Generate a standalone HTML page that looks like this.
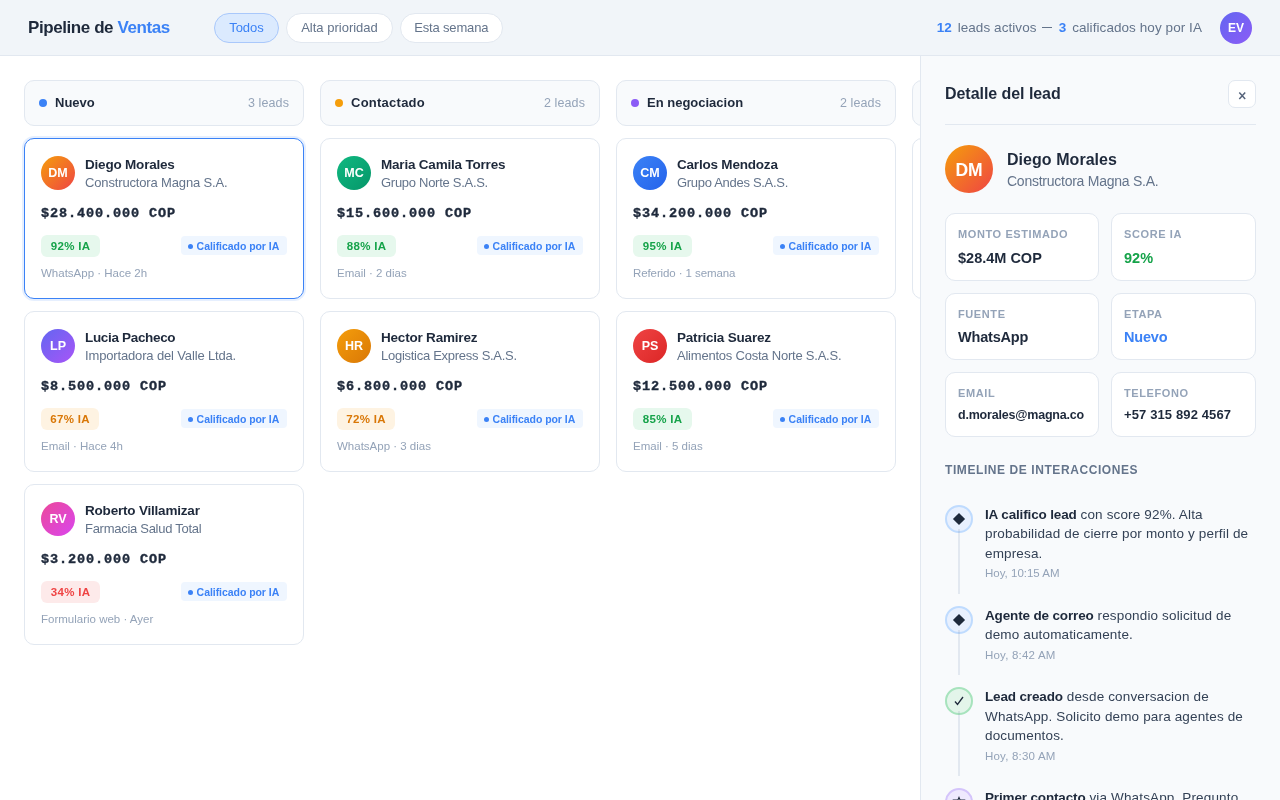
<!DOCTYPE html>
<html lang="es">
<head>
<meta charset="utf-8">
<title>Pipeline de Ventas</title>
<style>
*{box-sizing:border-box;margin:0;padding:0}
html,body{width:1280px;height:800px;overflow:hidden;background:#fff}
body{font-family:"Liberation Sans",sans-serif;color:#1e293b;position:relative;-webkit-font-smoothing:antialiased;will-change:transform}
.top{position:absolute;left:0;top:0;width:1280px;height:56px;background:#f1f5f9;border-bottom:1px solid #e2e8f0}
.brand{position:absolute;left:28px;top:17px;font-size:17px;font-weight:700;line-height:22px;color:#1e293b;white-space:nowrap;letter-spacing:-.42px}
.brand span{color:#3b82f6}
.chip{position:absolute;top:13px;height:30px;border:1px solid #e2e8f0;border-radius:15px;background:#fff;color:#64748b;font-size:13px;line-height:28px;text-align:center;white-space:nowrap}
.chip.on{background:#dbeafe;border-color:#a9c8fb;color:#3b82f6}
.stats{position:absolute;right:78px;top:18px;font-size:13.5px;letter-spacing:.07px;line-height:20px;color:#64748b;white-space:nowrap}
.stats b{color:#3b82f6;font-weight:700;margin-right:2px}
.me{position:absolute;left:1220px;top:12px;width:32px;height:32px;border-radius:50%;background:linear-gradient(135deg,#6366f1,#8b5cf6);color:#fff;font-size:12px;font-weight:700;line-height:32px;text-align:center}

.col{position:absolute;top:80px;width:280px}
.colh{height:46px;border:1px solid #e2e8f0;border-radius:10px;background:#f8fafc;position:relative}
.colh i{position:absolute;left:14px;top:18px;width:8px;height:8px;border-radius:50%}
.colh b{position:absolute;left:30px;top:13px;font-size:13px;line-height:18px;font-weight:700;color:#1e293b}
.colh span{position:absolute;right:14px;top:13px;font-size:12.5px;line-height:18px;letter-spacing:.1px;color:#94a3b8}
.card{position:relative;margin-top:12px;height:161px;border:1px solid #e2e8f0;border-radius:10px;background:#fff}
.card.sel{border-color:#3b82f6;box-shadow:0 0 0 2px rgba(59,130,246,.13)}
.av{position:absolute;left:16px;top:17px;width:34px;height:34px;border-radius:50%;color:#fff;font-size:12.5px;font-weight:700;line-height:34px;text-align:center}
.nm{position:absolute;left:60px;top:17px;font-size:13.5px;letter-spacing:-.2px;font-weight:700;line-height:18px;color:#1e293b;white-space:nowrap}
.co{position:absolute;left:60px;top:35px;font-size:13px;letter-spacing:-.15px;line-height:18px;color:#64748b;white-space:nowrap}
.amt{position:absolute;left:16px;top:67px;font-family:"Liberation Mono",monospace;font-size:13.5px;letter-spacing:.9px;font-weight:700;-webkit-text-stroke:.4px #1e293b;line-height:16px;color:#1e293b;white-space:nowrap}
.sc{position:absolute;left:16px;top:96px;height:22px;border-radius:6px;font-size:11.5px;letter-spacing:.3px;font-weight:700;line-height:22.6px;text-align:center}
.sc.g{background:#e6f8ed;color:#16a34a}
.sc.o{background:#fef3e2;color:#d97706}
.sc.r{background:#fdeaea;color:#ef4444}
.ia{position:absolute;right:16px;top:97px;width:106px;height:19px;border-radius:4px;background:#eff6ff;color:#3b82f6;font-size:10.5px;letter-spacing:-.05px;font-weight:700;line-height:20.2px;white-space:nowrap;padding-left:15.6px}
.ia:before{content:"";position:absolute;left:6.7px;top:7.5px;width:5px;height:5px;border-radius:50%;background:#3b82f6}
.ft{position:absolute;left:16px;top:126px;font-size:11.5px;line-height:16px;color:#94a3b8;white-space:nowrap}

.panel{position:absolute;left:920px;top:56px;width:360px;height:744px;background:#f8fafc;border-left:1px solid #e2e8f0;overflow:hidden}

.ph{position:absolute;left:24px;top:26px;font-size:16px;letter-spacing:-.05px;font-weight:700;line-height:24px;color:#1e293b;white-space:nowrap}
.px{position:absolute;left:307px;top:24px;width:28px;height:28px;border:1px solid #e2e8f0;border-radius:7px;background:#fff;color:#64748b;font-size:16px;line-height:26px;text-align:center}
.pl{position:absolute;left:24px;top:68px;width:311px;height:1px;background:#e2e8f0}
.pav{position:absolute;left:24px;top:89px;width:48px;height:48px;border-radius:50%;background:linear-gradient(135deg,#f59e0b,#ef4444);color:#fff;font-size:17.5px;font-weight:700;line-height:50px;text-align:center}
.pn{position:absolute;left:86px;top:93px;font-size:16px;letter-spacing:.05px;font-weight:700;line-height:22px;color:#1e293b;white-space:nowrap}
.pc{position:absolute;left:86px;top:114.5px;font-size:14px;letter-spacing:-.25px;line-height:20px;color:#64748b;white-space:nowrap}
.cell{position:absolute;border:1px solid #e2e8f0;border-radius:10px;background:#fff}
.cell u{position:absolute;left:12px;top:13px;text-decoration:none;font-size:11px;font-weight:700;line-height:14px;letter-spacing:.6px;color:#94a3b8;white-space:nowrap}
.cell b{position:absolute;left:12px;top:34px;font-size:14.5px;font-weight:700;line-height:20px;color:#1e293b;white-space:nowrap}
.cell b.s{font-size:13px;top:32px}
.tlh{position:absolute;left:24px;top:405.5px;font-size:12px;font-weight:700;line-height:16px;letter-spacing:.58px;color:#64748b;white-space:nowrap}
.tl{position:absolute;left:24px;width:311px}
.tl .ic{position:absolute;left:0;top:0;width:28px;height:28px;border-radius:50%;border:2px solid #bfdbfe;background:#e8f0fe;z-index:2}
.tl .ic.g{border-color:#a7e3bd;background:#e3f5ea}
.tl .ic.p{border-color:#d4c4fb;background:#efe9fe}
.tl .ln{position:absolute;left:13px;top:24px;width:2px;z-index:3;background:linear-gradient(180deg,rgba(148,163,184,.22) 0,rgba(148,163,184,.22) 4px,#e2e8f0 4px)}
.tl p{position:absolute;left:40px;top:.3px;width:274px;font-size:13.5px;letter-spacing:.15px;line-height:19.5px;color:#334155}
.tl p b{color:#1e293b;font-weight:700;letter-spacing:-.15px}
.tl em{position:absolute;left:40px;font-style:normal;font-size:11.5px;line-height:16px;color:#94a3b8;white-space:nowrap}
</style>
</head>
<body>
<div class="top">
  <div class="brand">Pipeline de <span>Ventas</span></div>
  <div class="chip on" style="left:214px;width:65px"><span>Todos</span></div>
  <div class="chip" style="left:286px;width:107px"><span>Alta prioridad</span></div>
  <div class="chip" style="left:400px;width:102.5px"><span style="letter-spacing:-.15px">Esta semana</span></div>
  <div class="stats"><b>12</b> <span>leads activos</span> <span style="display:inline-block;width:10px;height:1px;background:#64748b;vertical-align:4px;margin:0 3.2px 0 1.3px"></span> <b>3</b> <span>calificados hoy por IA</span></div>
  <div class="me">EV</div>
</div>

<div class="col" style="left:24px">
  <div class="colh"><i style="background:#3b82f6"></i><b>Nuevo</b><span>3 leads</span></div>
  <div class="card sel">
    <div class="av" style="background:linear-gradient(135deg,#f59e0b,#ef4444)">DM</div>
    <div class="nm">Diego Morales</div><div class="co">Constructora Magna S.A.</div>
    <div class="amt">$28.400.000 COP</div>
    <div class="sc g" style="width:59px">92% IA</div><div class="ia">Calificado por IA</div>
    <div class="ft">WhatsApp · Hace 2h</div>
  </div>
  <div class="card">
    <div class="av" style="background:linear-gradient(135deg,#6366f1,#a855f7)">LP</div>
    <div class="nm" style="letter-spacing:-.33px">Lucia Pacheco</div><div class="co">Importadora del Valle Ltda.</div>
    <div class="amt">$8.500.000 COP</div>
    <div class="sc o" style="width:58px">67% IA</div><div class="ia">Calificado por IA</div>
    <div class="ft">Email · Hace 4h</div>
  </div>
  <div class="card">
    <div class="av" style="background:linear-gradient(135deg,#ec4899,#d946ef)">RV</div>
    <div class="nm">Roberto Villamizar</div><div class="co" style="letter-spacing:-.28px">Farmacia Salud Total</div>
    <div class="amt">$3.200.000 COP</div>
    <div class="sc r" style="width:59px">34% IA</div><div class="ia">Calificado por IA</div>
    <div class="ft">Formulario web · Ayer</div>
  </div>
</div>

<div class="col" style="left:320px">
  <div class="colh"><i style="background:#f59e0b"></i><b style="letter-spacing:.25px">Contactado</b><span>2 leads</span></div>
  <div class="card">
    <div class="av" style="background:linear-gradient(135deg,#10b981,#059669)">MC</div>
    <div class="nm">Maria Camila Torres</div><div class="co" style="letter-spacing:-.28px">Grupo Norte S.A.S.</div>
    <div class="amt">$15.600.000 COP</div>
    <div class="sc g" style="width:59px">88% IA</div><div class="ia">Calificado por IA</div>
    <div class="ft">Email · 2 dias</div>
  </div>
  <div class="card">
    <div class="av" style="background:linear-gradient(135deg,#f59e0b,#d97706)">HR</div>
    <div class="nm">Hector Ramirez</div><div class="co" style="letter-spacing:-.27px">Logistica Express S.A.S.</div>
    <div class="amt">$6.800.000 COP</div>
    <div class="sc o" style="width:58px">72% IA</div><div class="ia">Calificado por IA</div>
    <div class="ft">WhatsApp · 3 dias</div>
  </div>
</div>

<div class="col" style="left:616px">
  <div class="colh"><i style="background:#8b5cf6"></i><b>En negociacion</b><span>2 leads</span></div>
  <div class="card">
    <div class="av" style="background:linear-gradient(135deg,#3b82f6,#2563eb)">CM</div>
    <div class="nm">Carlos Mendoza</div><div class="co" style="letter-spacing:-.3px">Grupo Andes S.A.S.</div>
    <div class="amt">$34.200.000 COP</div>
    <div class="sc g" style="width:59px">95% IA</div><div class="ia">Calificado por IA</div>
    <div class="ft" style="letter-spacing:-.1px">Referido · 1 semana</div>
  </div>
  <div class="card">
    <div class="av" style="background:linear-gradient(135deg,#ef4444,#dc2626)">PS</div>
    <div class="nm">Patricia Suarez</div><div class="co" style="letter-spacing:-.22px">Alimentos Costa Norte S.A.S.</div>
    <div class="amt">$12.500.000 COP</div>
    <div class="sc g" style="width:59px">85% IA</div><div class="ia">Calificado por IA</div>
    <div class="ft">Email · 5 dias</div>
  </div>
</div>

<div class="col" style="left:912px">
  <div class="colh"></div>
  <div class="card"></div>
</div>

<div class="panel">
  <div class="ph">Detalle del lead</div>
  <div class="px"><svg width="26" height="26" viewBox="0 0 26 26" style="position:absolute;left:0;top:0"><path d="M10.3 11.6 16.2 17.9M16.2 11.6 10.3 17.9" stroke="#55637a" stroke-width="1.5" fill="none"/></svg></div>
  <div class="pl"></div>
  <div class="pav">DM</div>
  <div class="pn">Diego Morales</div>
  <div class="pc">Constructora Magna S.A.</div>
  <div class="cell" style="left:24px;top:157px;width:154px;height:68px"><u>MONTO ESTIMADO</u><b>$28.4M COP</b></div>
  <div class="cell" style="left:190px;top:157px;width:145px;height:68px"><u>SCORE IA</u><b style="color:#16a34a">92%</b></div>
  <div class="cell" style="left:24px;top:237px;width:154px;height:67px"><u>FUENTE</u><b style="top:33px;letter-spacing:-.2px">WhatsApp</b></div>
  <div class="cell" style="left:190px;top:237px;width:145px;height:67px"><u>ETAPA</u><b style="color:#3b82f6;top:33px;letter-spacing:-.2px">Nuevo</b></div>
  <div class="cell" style="left:24px;top:316px;width:154px;height:65px"><u>EMAIL</u><b class="s" style="font-size:12.5px;letter-spacing:-.2px">d.morales@magna.co</b></div>
  <div class="cell" style="left:190px;top:316px;width:145px;height:65px"><u>TELEFONO</u><b class="s" style="letter-spacing:.12px">+57 315 892 4567</b></div>
  <div class="tlh">TIMELINE DE INTERACCIONES</div>

  <div class="tl" style="top:448.7px">
    <div class="ic"><svg width="24" height="24" viewBox="0 0 24 24" style="position:absolute;left:0;top:0"><path d="M12 5.9 18.1 12 12 18.1 5.9 12Z" fill="#1e293b"/></svg></div>
    <div class="ln" style="height:65px"></div>
    <p><b>IA califico lead</b> con score 92%. Alta probabilidad de cierre por monto y perfil de empresa.</p>
    <em style="top:60.5px">Hoy, 10:15 AM</em>
  </div>
  <div class="tl" style="top:549.6px">
    <div class="ic"><svg width="24" height="24" viewBox="0 0 24 24" style="position:absolute;left:0;top:0"><path d="M12 5.9 18.1 12 12 18.1 5.9 12Z" fill="#1e293b"/></svg></div>
    <div class="ln" style="height:45px"></div>
    <p><b>Agente de correo</b> respondio solicitud de demo automaticamente.</p>
    <em style="top:41.2px;letter-spacing:.2px">Hoy, 8:42 AM</em>
  </div>
  <div class="tl" style="top:630.9px">
    <div class="ic g"><svg width="24" height="24" viewBox="0 0 24 24" style="position:absolute;left:0;top:0"><path d="M8 12.5 10.5 15.5 16 8" fill="none" stroke="#1e293b" stroke-width="1.3"/></svg></div>
    <div class="ln" style="height:65px"></div>
    <p><b>Lead creado</b> desde conversacion de WhatsApp. Solicito demo para agentes de documentos.</p>
    <em style="top:61.2px;letter-spacing:.2px">Hoy, 8:30 AM</em>
  </div>
  <div class="tl" style="top:731.7px">
    <div class="ic p"><svg width="24" height="24" viewBox="0 0 24 24" style="position:absolute;left:0;top:0"><path d="M12 7.4 13.1 9.9 17.2 10 14.3 12.6 15.3 16.6 12 14.5 8.7 16.6 9.7 12.6 6.8 10 10.9 9.9Z" fill="none" stroke="#1e293b" stroke-width="1.1"/></svg></div>
    <p><b>Primer contacto</b> via WhatsApp. Pregunto por precios.</p>
  </div>
</div>
</body>
</html>
